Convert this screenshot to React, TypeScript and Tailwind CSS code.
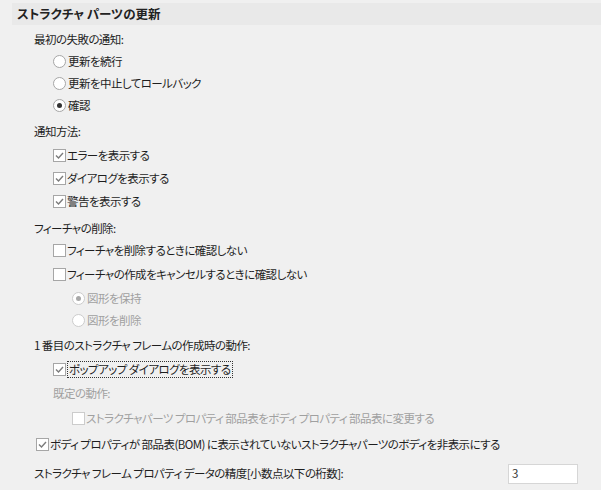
import type { ReactNode } from "react";

const font = {
  fontFamily: '"Noto Sans CJK JP", "Noto Sans", sans-serif',
  fontFeatureSettings: '"palt"',
};

function CheckBox({ checked, disabled }: { checked?: boolean; disabled?: boolean }) {
  return (
    <span
      className={`flex h-[13px] w-[13px] shrink-0 items-center justify-center border bg-white ${
        disabled ? "border-[#cccccc]" : "border-[#a6a6a6]"
      }`}
    >
      {checked && (
        <svg width="9" height="9" viewBox="0 0 9 9">
          <path d="M1 4.5 L3.5 7 L8 2" fill="none" stroke="#7b7b7b" strokeWidth="1.4" />
        </svg>
      )}
    </span>
  );
}

function Radio({ checked, disabled }: { checked?: boolean; disabled?: boolean }) {
  return (
    <span
      className={`flex h-[13px] w-[13px] shrink-0 items-center justify-center rounded-full border bg-white ${
        disabled ? "border-[#cccccc]" : "border-[#a6a6a6]"
      }`}
    >
      {checked && (
        <span
          className={`h-[5px] w-[5px] rounded-full ${disabled ? "bg-[#a8a8a8]" : "bg-[#333333]"}`}
        />
      )}
    </span>
  );
}

function Row({
  indent,
  top = 0,
  children,
}: {
  indent: string;
  top?: number;
  children: ReactNode;
}) {
  return (
    <div className={`flex h-[22px] items-center pt-[1px] ${indent}`} style={{ marginTop: top }}>
      {children}
    </div>
  );
}

function Label({ text, disabled }: { text: string; disabled?: boolean }) {
  return <span className={disabled ? "text-[#a0a0a0]" : "text-[#1e1e1e]"}>{text}</span>;
}

export default function App() {
  return (
    <div
      className="h-[490px] w-[601px] overflow-hidden bg-[#f0f0f0] pt-[3px] text-[11.5px] leading-none tracking-[-0.55px] text-[#1e1e1e]"
      style={font}
    >
      <div className="ml-[12px] flex h-[22px] items-center bg-[#e9e9e9] pl-[5px] text-[12.5px] font-bold tracking-normal text-[#222222]">
        ストラクチャ パーツの更新
      </div>

      <Row indent="pl-[34px]" top={3}>
        <Label text="最初の失敗の通知:" />
      </Row>
      <Row indent="pl-[53px] gap-[2px]">
        <Radio />
        <Label text="更新を続行" />
      </Row>
      <Row indent="pl-[53px] gap-[2px]">
        <Radio />
        <Label text="更新を中止してロールバック" />
      </Row>
      <Row indent="pl-[53px] gap-[2px]">
        <Radio checked />
        <Label text="確認" />
      </Row>

      <Row indent="pl-[34px]" top={4}>
        <Label text="通知方法:" />
      </Row>
      <Row indent="pl-[53px] gap-[1px]" top={2}>
        <CheckBox checked />
        <Label text="エラーを表示する" />
      </Row>
      <Row indent="pl-[53px] gap-[1px]" top={1}>
        <CheckBox checked />
        <Label text="ダイアログを表示する" />
      </Row>
      <Row indent="pl-[53px] gap-[1px]" top={1}>
        <CheckBox checked />
        <Label text="警告を表示する" />
      </Row>

      <Row indent="pl-[34px]" top={5}>
        <Label text="フィーチャの削除:" />
      </Row>
      <Row indent="pl-[53px] gap-[1px]">
        <CheckBox />
        <Label text="フィーチャを削除するときに確認しない" />
      </Row>
      <Row indent="pl-[53px] gap-[1px]" top={2}>
        <CheckBox />
        <Label text="フィーチャの作成をキャンセルするときに確認しない" />
      </Row>
      <Row indent="pl-[72px] gap-[2px]" top={2}>
        <Radio checked disabled />
        <Label text="図形を保持" disabled />
      </Row>
      <Row indent="pl-[72px] gap-[2px]">
        <Radio disabled />
        <Label text="図形を削除" disabled />
      </Row>

      <Row indent="pl-[34px]" top={3}>
        <Label text="1 番目のストラクチャ フレームの作成時の動作:" />
      </Row>
      <Row indent="pl-[53px] gap-[1px]" top={2}>
        <CheckBox checked />
        <span className="border border-dotted border-[#333333] px-[1px] py-[2px]">
          ポップアップ ダイアログを表示する
        </span>
      </Row>
      <Row indent="pl-[53px]" top={2}>
        <Label text="既定の動作:" disabled />
      </Row>
      <Row indent="pl-[72px] gap-[1px]" top={3}>
        <CheckBox disabled />
        <Label text="ストラクチャパーツ プロパティ 部品表をボディ プロパティ 部品表に変更する" disabled />
      </Row>

      <Row indent="pl-[36px] gap-[1px]" top={4}>
        <CheckBox checked />
        <Label text="ボディ プロパティが 部品表(BOM) に表示されていないストラクチャパーツのボディを非表示にする" />
      </Row>

      <div className="mt-[8px] flex h-[22px] items-center pl-[34px]">
        <span className="flex-1">ストラクチャ フレーム プロパティ データの精度[小数点以下の桁数]:</span>
        <div className="mr-[23px] flex h-[20px] w-[70px] items-center border border-[#d6d6d6] bg-white pl-[3px] text-[#333333]">
          3
        </div>
      </div>
    </div>
  );
}
